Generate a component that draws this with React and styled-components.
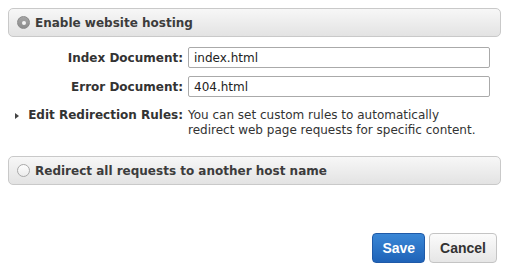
import React from "react";
import styled, { createGlobalStyle } from "styled-components";

const Global = createGlobalStyle`
  html, body { margin: 0; padding: 0; background: #fff; }
  body { font-family: "DejaVu Sans", Verdana, sans-serif; font-size: 12px; color: #333; }
`;

const Page = styled.div`
  width: 508px;
  height: 272px;
  box-sizing: border-box;
  padding: 8px 7px 0 8px;
  display: flex;
  flex-direction: column;
`;

const Panel = styled.div`
  height: 29px;
  box-sizing: border-box;
  border: 1px solid #c9c9c9;
  border-radius: 5px;
  background: linear-gradient(#f7f7f7, #e3e3e3);
  display: flex;
  align-items: center;
  padding-left: 8px;
  gap: 5px;
  font-weight: bold;
  font-size: 12px;
  color: #3c3c3c;
  margin-top: ${(p) => p.$mt || 0}px;
`;

const Radio = styled.span`
  width: 13px;
  height: 13px;
  box-sizing: border-box;
  border-radius: 50%;
  border: 1px solid ${(p) => (p.$checked ? "#8a8a8a" : "#a9a9a9")};
  background: ${(p) => (p.$checked ? "linear-gradient(#a5a5a5, #8c8c8c)" : "linear-gradient(#fdfdfd, #ececec)")};
  display: flex;
  align-items: center;
  justify-content: center;
  &::after {
    content: "";
    display: ${(p) => (p.$checked ? "block" : "none")};
    width: 4px;
    height: 4px;
    border-radius: 50%;
    background: #f4f4f4;
  }
`;

const Form = styled.div`
  display: grid;
  grid-template-columns: 175px 302px;
  column-gap: 5px;
  row-gap: 8px;
  margin-top: 10px;
  align-items: center;
`;

const Label = styled.div`
  text-align: right;
  font-weight: bold;
  color: #333;
  font-size: 12px;
`;

const Input = styled.div`
  height: 21px;
  box-sizing: border-box;
  border: 1px solid #aaa;
  border-radius: 2px;
  padding: 0 5px;
  display: flex;
  align-items: center;
  font-size: 12px;
  color: #222;
  background: #fff;
`;

const RuleLabel = styled.div`
  display: flex;
  align-items: center;
  justify-content: flex-end;
  gap: 9px;
  font-weight: bold;
  color: #333;
  align-self: start;
  margin-top: 3px;
  line-height: 15px;
`;

const Triangle = styled.span`
  width: 0;
  height: 0;
  border-top: 3.5px solid transparent;
  border-bottom: 3.5px solid transparent;
  border-left: 4px solid #444;
`;

const Desc = styled.div`
  line-height: 15px;
  color: #333;
  margin-top: 3px;
`;

const Footer = styled.div`
  display: flex;
  justify-content: flex-end;
  gap: 4px;
  margin-top: 48px;
  padding-right: 4px;
`;

const Button = styled.button`
  height: 30px;
  padding: 0 ${(p) => (p.$primary ? 9 : 10)}px;
  border-radius: 4px;
  font-family: "Liberation Sans", Arial, sans-serif;
  font-weight: bold;
  font-size: 14px;
  cursor: pointer;
  border: 1px solid ${(p) => (p.$primary ? "#1f5aa8" : "#c4c4c4")};
  color: ${(p) => (p.$primary ? "#fff" : "#333")};
  background: ${(p) => (p.$primary ? "linear-gradient(#3a87d6, #1f63b8)" : "linear-gradient(#fbfbfb, #e6e6e6)")};
`;

export default function App() {
  return (
    <>
      <Global />
      <Page>
        <Panel>
          <Radio $checked />
          Enable website hosting
        </Panel>
        <Form>
          <Label>Index Document:</Label>
          <Input>index.html</Input>
          <Label>Error Document:</Label>
          <Input>404.html</Input>
          <RuleLabel>
            <Triangle />
            Edit Redirection Rules:
          </RuleLabel>
          <Desc>
            You can set custom rules to automatically
            <br />
            redirect web page requests for specific content.
          </Desc>
        </Form>
        <Panel $mt={18}>
          <Radio />
          Redirect all requests to another host name
        </Panel>
        <Footer>
          <Button $primary>Save</Button>
          <Button>Cancel</Button>
        </Footer>
      </Page>
    </>
  );
}
